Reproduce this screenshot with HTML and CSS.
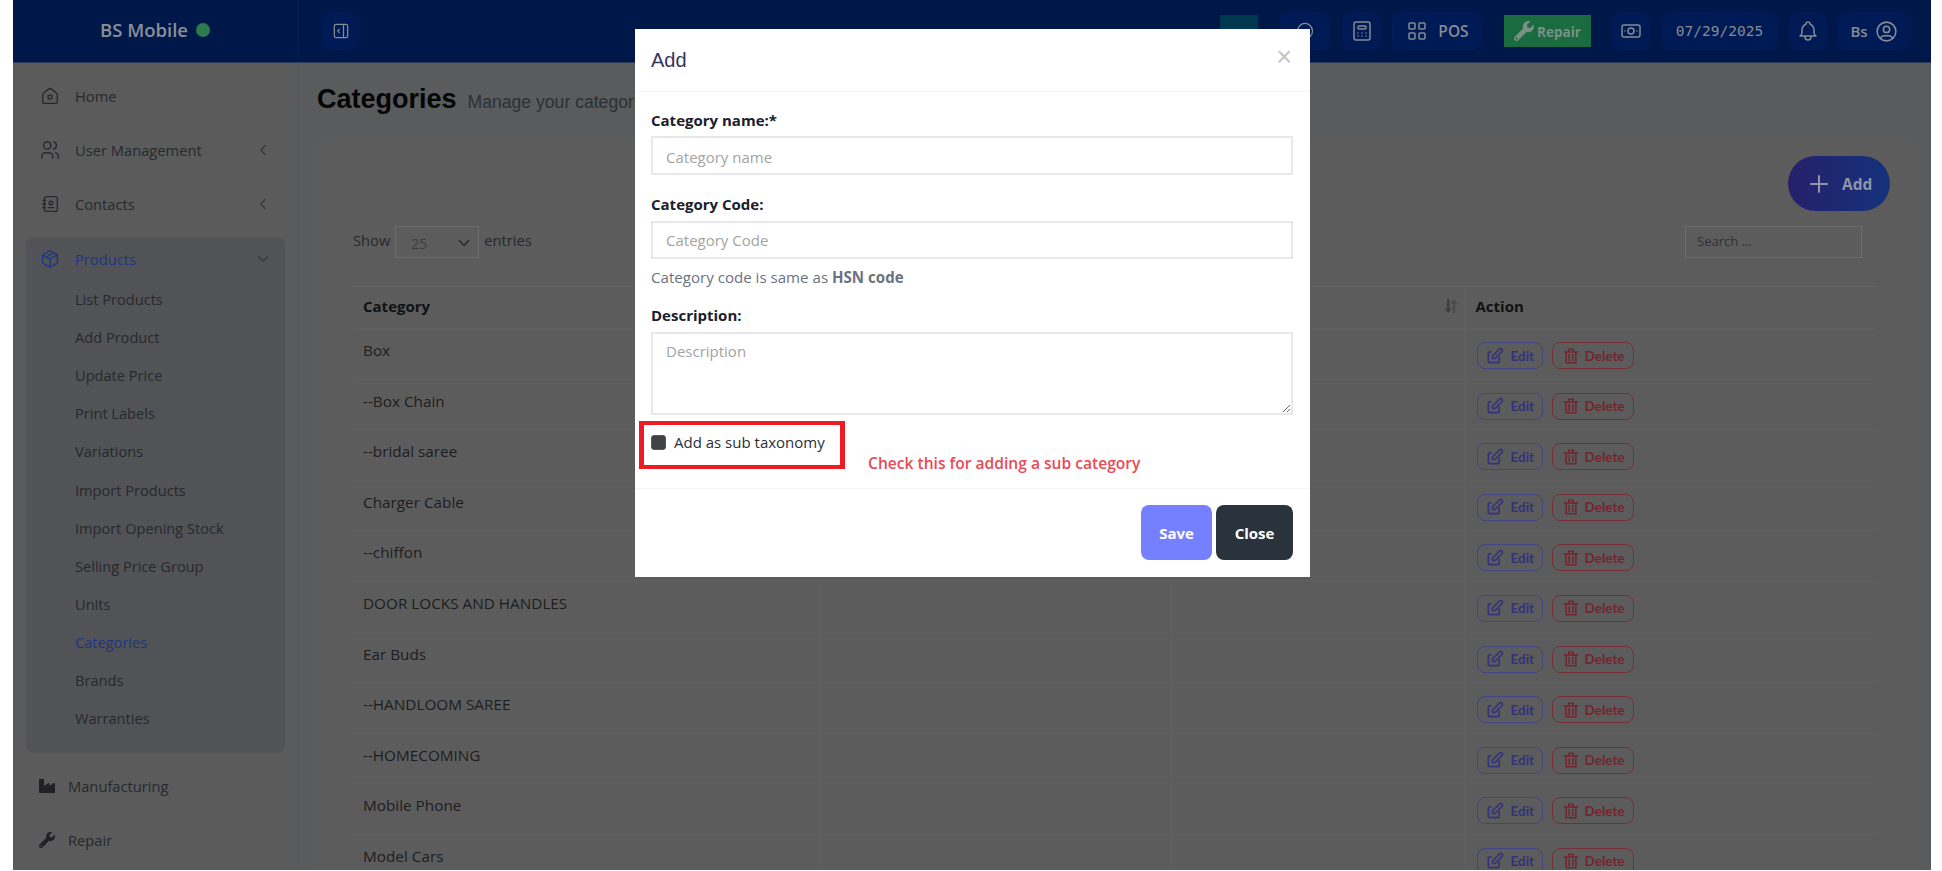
FILE: index.html
```html
<!DOCTYPE html>
<html lang="en">
<head>
  <meta charset="UTF-8" />
  <title>Categories</title>
  <link rel="stylesheet" href="styles.css">
</head>
<body>

  <svg class="sprite" xmlns="http://www.w3.org/2000/svg">
    <symbol id="i-home" viewBox="0 0 24 24"><path d="M19 8.7l-5.3-4.2a2.8 2.8 0 0 0 -3.4 0l-5.3 4.2a2.8 2.8 0 0 0 -1 2.2v7.1a2 2 0 0 0 2 2h12a2 2 0 0 0 2 -2v-7.1a2.8 2.8 0 0 0 -1 -2.2 M10 11h4v4h-4z"/></symbol>
    <symbol id="i-users" viewBox="0 0 24 24"><path d="M9 7m-4 0a4 4 0 1 0 8 0a4 4 0 1 0 -8 0 M3 21v-2a4 4 0 0 1 4 -4h4a4 4 0 0 1 4 4v2 M16 3.13a4 4 0 0 1 0 7.75 M21 21v-2a4 4 0 0 0 -3 -3.85"/></symbol>
    <symbol id="i-book" viewBox="0 0 24 24"><path d="M20 6v12a2 2 0 0 1 -2 2h-10a2 2 0 0 1 -2 -2v-12a2 2 0 0 1 2 -2h10a2 2 0 0 1 2 2z M10 16h6 M13 11m-2 0a2 2 0 1 0 4 0a2 2 0 1 0 -4 0 M4 8h3 M4 12h3 M4 16h3"/></symbol>
    <symbol id="i-box" viewBox="0 0 24 24"><path d="M12 3l8 4.5l0 9l-8 4.5l-8 -4.5l0 -9l8 -4.5 M12 12l8 -4.5 M12 12l0 9 M12 12l-8 -4.5 M16 5.25l-8 4.5"/></symbol>
    <symbol id="i-left" viewBox="0 0 24 24"><path d="M15 6l-6 6l6 6"/></symbol>
    <symbol id="i-down" viewBox="0 0 24 24"><path d="M6 9l6 6l6 -6"/></symbol>
    <symbol id="i-panel" viewBox="0 0 24 24"><path d="M4 4m0 2a2 2 0 0 1 2 -2h12a2 2 0 0 1 2 2v12a2 2 0 0 1 -2 2h-12a2 2 0 0 1 -2 -2z M15 4v16 M10 10l-2 2l2 2"/></symbol>
    <symbol id="i-calc" viewBox="0 0 24 24"><path d="M4 3m0 2a2 2 0 0 1 2 -2h12a2 2 0 0 1 2 2v14a2 2 0 0 1 -2 2h-12a2 2 0 0 1 -2 -2z M8 7m0 1a1 1 0 0 1 1 -1h6a1 1 0 0 1 1 1v1a1 1 0 0 1 -1 1h-6a1 1 0 0 1 -1 -1z M8 14v.01 M12 14v.01 M16 14v.01 M8 17v.01 M12 17v.01 M16 17v.01"/></symbol>
    <symbol id="i-grid" viewBox="0 0 24 24"><path d="M4 4m0 1a1 1 0 0 1 1 -1h4a1 1 0 0 1 1 1v4a1 1 0 0 1 -1 1h-4a1 1 0 0 1 -1 -1z M14 4m0 1a1 1 0 0 1 1 -1h4a1 1 0 0 1 1 1v4a1 1 0 0 1 -1 1h-4a1 1 0 0 1 -1 -1z M4 14m0 1a1 1 0 0 1 1 -1h4a1 1 0 0 1 1 1v4a1 1 0 0 1 -1 1h-4a1 1 0 0 1 -1 -1z M14 14m0 1a1 1 0 0 1 1 -1h4a1 1 0 0 1 1 1v4a1 1 0 0 1 -1 1h-4a1 1 0 0 1 -1 -1z"/></symbol>
    <symbol id="i-cash" viewBox="0 0 24 24"><path d="M12 12m-3 0a3 3 0 1 0 6 0a3 3 0 1 0 -6 0 M3 6m0 2a2 2 0 0 1 2 -2h14a2 2 0 0 1 2 2v8a2 2 0 0 1 -2 2h-14a2 2 0 0 1 -2 -2z M18 12l.01 0 M6 12l.01 0"/></symbol>
    <symbol id="i-bell" viewBox="0 0 24 24"><path d="M10 5a2 2 0 1 1 4 0a7 7 0 0 1 4 6v3a4 4 0 0 0 2 3h-16a4 4 0 0 0 2 -3v-3a7 7 0 0 1 4 -6 M9 17v1a3 3 0 0 0 6 0v-1"/></symbol>
    <symbol id="i-user" viewBox="0 0 24 24"><path d="M12 12m-9 0a9 9 0 1 0 18 0a9 9 0 1 0 -18 0 M12 10m-3 0a3 3 0 1 0 6 0a3 3 0 1 0 -6 0 M6.168 18.849a4 4 0 0 1 3.832 -2.849h4a4 4 0 0 1 3.834 2.855"/></symbol>
    <symbol id="i-clock" viewBox="0 0 24 24"><path d="M12 12m-9 0a9 9 0 1 0 18 0a9 9 0 1 0 -18 0"/></symbol>
    <symbol id="i-edit" viewBox="0 0 24 24"><path d="M7 7h-1a2 2 0 0 0 -2 2v9a2 2 0 0 0 2 2h9a2 2 0 0 0 2 -2v-5 M20.400 6.600a2.100 2.100 0 0 0 -3 -3l-8.400 8.400v3h3l8.400 -8.400z"/></symbol>
    <symbol id="i-trash" viewBox="0 0 24 24"><path d="M3 6.500h18 M9 6V3h6v3 M5.500 7v14h13V7 M9.500 10v8 M14.500 10v8"/></symbol>
    <symbol id="i-plus" viewBox="0 0 24 24"><path d="M12 4v16 M4 12h16"/></symbol>
    <symbol id="i-wrench" viewBox="0 0 512 512"><path d="M507.73 109.1c-2.24-9.03-13.54-12.09-20.12-5.51l-74.36 74.36-67.88-11.31-11.31-67.88 74.36-74.36c6.62-6.62 3.43-17.9-5.66-20.16-47.38-11.74-99.55.91-136.58 37.93-39.64 39.64-50.55 97.1-34.05 147.2L18.74 402.76c-24.99 24.99-24.99 65.51 0 90.5 24.99 24.99 65.51 24.99 90.5 0l213.21-213.21c50.12 16.71 107.47 5.68 147.37-34.22 37.07-37.07 49.7-89.32 37.91-136.73zM64 472c-13.25 0-24-10.75-24-24 0-13.26 10.75-24 24-24s24 10.74 24 24c0 13.25-10.75 24-24 24z"/></symbol>
    <symbol id="i-industry" viewBox="0 0 512 512"><path d="M475.115 163.781L336 252.309v-68.28c0-18.916-20.931-30.399-36.885-20.248L160 252.309V56c0-13.255-10.745-24-24-24H24C10.745 32 0 42.745 0 56v400c0 13.255 10.745 24 24 24h464c13.255 0 24-10.745 24-24V184.029c0-18.917-20.931-30.399-36.885-20.248z"/></symbol>
  </svg>

  <div class="page">

    <header class="topbar">
      <div class="brand">
        <span class="brand-name">BS Mobile</span>
        <span class="brand-dot"></span>
      </div>
      <div class="topbar-main">
        <button class="top-btn toggle-btn"><svg class="icon icon-20"><use href="#i-panel"/></svg></button>
        <div class="topbar-right">
          <span class="teal-btn"></span>
          <button class="top-btn clock-btn"><svg class="icon icon-20"><use href="#i-clock"/></svg></button>
          <button class="top-btn square-btn"><svg class="icon icon-24"><use href="#i-calc"/></svg></button>
          <button class="top-btn pos-btn"><svg class="icon icon-24"><use href="#i-grid"/></svg><span>POS</span></button>
          <button class="repair-btn"><svg class="fill-icon repair-icon"><use href="#i-wrench"/></svg><span>Repair</span></button>
          <button class="top-btn square-btn"><svg class="icon icon-24"><use href="#i-cash"/></svg></button>
          <button class="top-btn date-btn">07/29/2025</button>
          <button class="top-btn square-btn"><svg class="icon icon-24"><use href="#i-bell"/></svg></button>
          <button class="top-btn user-btn"><span>Bs</span><svg class="icon icon-25"><use href="#i-user"/></svg></button>
        </div>
      </div>
    </header>

    <div class="layout">
      <aside class="sidebar">
        <a class="nav-item"><svg class="icon nav-icon"><use href="#i-home"/></svg><span>Home</span></a>
        <a class="nav-item"><svg class="icon nav-icon"><use href="#i-users"/></svg><span>User Management</span><svg class="icon nav-arrow"><use href="#i-left"/></svg></a>
        <a class="nav-item"><svg class="icon nav-icon"><use href="#i-book"/></svg><span>Contacts</span><svg class="icon nav-arrow"><use href="#i-left"/></svg></a>

        <div class="nav-group">
          <a class="nav-head"><svg class="icon nav-icon"><use href="#i-box"/></svg><span>Products</span><svg class="icon nav-arrow"><use href="#i-down"/></svg></a>
          <a class="sub-item">List Products</a>
          <a class="sub-item">Add Product</a>
          <a class="sub-item">Update Price</a>
          <a class="sub-item">Print Labels</a>
          <a class="sub-item">Variations</a>
          <a class="sub-item">Import Products</a>
          <a class="sub-item">Import Opening Stock</a>
          <a class="sub-item">Selling Price Group</a>
          <a class="sub-item">Units</a>
          <a class="sub-item active">Categories</a>
          <a class="sub-item">Brands</a>
          <a class="sub-item">Warranties</a>
        </div>

        <a class="nav-item solid first-solid"><svg class="fill-icon"><use href="#i-industry"/></svg><span>Manufacturing</span></a>
        <a class="nav-item solid"><svg class="fill-icon"><use href="#i-wrench"/></svg><span>Repair</span></a>
      </aside>

      <main class="content">
        <div class="page-title">
          <h1>Categories</h1>
          <small>Manage your categories</small>
        </div>

        <section class="card">
          <div class="add-row">
            <button class="add-btn"><svg class="icon"><use href="#i-plus"/></svg><span>Add</span></button>
          </div>

          <div class="table-tools">
            <div class="show-entries">
              <span>Show</span>
              <div class="len-select"><span>25</span><svg class="icon"><use href="#i-down"/></svg></div>
              <span>entries</span>
            </div>
            <input class="search" type="text" placeholder="Search ...">
          </div>

          <table class="data-table">
            <thead>
              <tr>
                <th class="col-name">Category</th>
                <th class="col-code"></th>
                <th class="col-desc">
                  <svg class="sort-icon" viewBox="0 0 16 16"><path class="sort-down" d="M4 1h2.400v9.500H9L5.200 15 1.400 10.500H4z"/><path class="sort-up" d="M11 1l3.800 4.500H12.200V15H9.800V5.500H7.200z"/></svg>
                </th>
                <th>Action</th>
              </tr>
            </thead>
            <tbody>
              <tr><td>Box</td><td></td><td></td><td><button class="act edit"><svg class="icon"><use href="#i-edit"/></svg>Edit</button><button class="act del"><svg class="icon"><use href="#i-trash"/></svg>Delete</button></td></tr>
              <tr><td>--Box Chain</td><td></td><td></td><td><button class="act edit"><svg class="icon"><use href="#i-edit"/></svg>Edit</button><button class="act del"><svg class="icon"><use href="#i-trash"/></svg>Delete</button></td></tr>
              <tr><td>--bridal saree</td><td></td><td></td><td><button class="act edit"><svg class="icon"><use href="#i-edit"/></svg>Edit</button><button class="act del"><svg class="icon"><use href="#i-trash"/></svg>Delete</button></td></tr>
              <tr><td>Charger Cable</td><td></td><td></td><td><button class="act edit"><svg class="icon"><use href="#i-edit"/></svg>Edit</button><button class="act del"><svg class="icon"><use href="#i-trash"/></svg>Delete</button></td></tr>
              <tr><td>--chiffon</td><td></td><td></td><td><button class="act edit"><svg class="icon"><use href="#i-edit"/></svg>Edit</button><button class="act del"><svg class="icon"><use href="#i-trash"/></svg>Delete</button></td></tr>
              <tr><td>DOOR LOCKS AND HANDLES</td><td></td><td></td><td><button class="act edit"><svg class="icon"><use href="#i-edit"/></svg>Edit</button><button class="act del"><svg class="icon"><use href="#i-trash"/></svg>Delete</button></td></tr>
              <tr><td>Ear Buds</td><td></td><td></td><td><button class="act edit"><svg class="icon"><use href="#i-edit"/></svg>Edit</button><button class="act del"><svg class="icon"><use href="#i-trash"/></svg>Delete</button></td></tr>
              <tr><td>--HANDLOOM SAREE</td><td></td><td></td><td><button class="act edit"><svg class="icon"><use href="#i-edit"/></svg>Edit</button><button class="act del"><svg class="icon"><use href="#i-trash"/></svg>Delete</button></td></tr>
              <tr><td>--HOMECOMING</td><td></td><td></td><td><button class="act edit"><svg class="icon"><use href="#i-edit"/></svg>Edit</button><button class="act del"><svg class="icon"><use href="#i-trash"/></svg>Delete</button></td></tr>
              <tr><td>Mobile Phone</td><td></td><td></td><td><button class="act edit"><svg class="icon"><use href="#i-edit"/></svg>Edit</button><button class="act del"><svg class="icon"><use href="#i-trash"/></svg>Delete</button></td></tr>
              <tr><td>Model Cars</td><td></td><td></td><td><button class="act edit"><svg class="icon"><use href="#i-edit"/></svg>Edit</button><button class="act del"><svg class="icon"><use href="#i-trash"/></svg>Delete</button></td></tr>
            </tbody>
          </table>
        </section>
      </main>
    </div>

    <div class="modal">
      <div class="modal-header">
        <h4>Add</h4>
        <span class="modal-close">×</span>
      </div>
      <div class="modal-body">
        <label class="field-label">Category name:*</label>
        <input class="field name-field" type="text" placeholder="Category name">

        <label class="field-label code-label">Category Code:</label>
        <input class="field code-field" type="text" placeholder="Category Code">
        <p class="help">Category code is same as <strong>HSN code</strong></p>

        <label class="field-label desc-label">Description:</label>
        <textarea class="field desc-field" placeholder="Description"></textarea>

        <label class="check-row"><input type="checkbox"><span>Add as sub taxonomy</span></label>
      </div>
      <div class="modal-footer">
        <button class="btn-save">Save</button>
        <button class="btn-close">Close</button>
      </div>

      <!-- annotation drawn on top of the form -->
      <div class="mark-box"></div>
      <div class="mark-note">Check this for adding a sub category</div>
    </div>

  </div>

</body>
</html>
```

FILE: styles.css
```css
* {
  box-sizing: border-box;
}

body {
  margin: 0;
  background-color: #ffffff;
  font-family: "Open Sans", sans-serif;
  color: #27292d;
}

.sprite {
  display: none;
}

button {
  font-family: inherit;
  border: none;
  padding: 0;
}

.icon {
  fill: none;
  stroke: currentColor;
  stroke-width: 1.5;
  stroke-linecap: round;
  stroke-linejoin: round;
}

.fill-icon {
  fill: currentColor;
}

.icon-20 { width: 20px; height: 20px; }
.icon-24 { width: 24px; height: 24px; }
.icon-25 { width: 25px; height: 25px; }

.page {
  position: relative;
  width: 1918px;
  height: 870px;
  margin-left: 13px;
  overflow: hidden;
  background-color: #595b5d;
}

/* top bar */
.topbar {
  display: flex;
  height: 63px;
  background-color: #00174a;
  border-bottom: 1px solid #2c3a5c;
}

.brand {
  display: flex;
  align-items: center;
  gap: 8px;
  width: 286px;
  height: 62px;
  padding: 0 0 3px 87px;
  border-right: 1px solid #05214f;
}

.brand-name {
  font-size: 18.5px;
  font-weight: 600;
  color: #8b8f98;
}

.brand-dot {
  width: 14px;
  height: 14px;
  border-radius: 50%;
  background-color: #2d7a4f;
}

.topbar-main {
  flex: 1;
  display: flex;
  align-items: center;
  justify-content: space-between;
  padding: 0 20px 0 23px;
}

.top-btn {
  display: flex;
  align-items: center;
  justify-content: center;
  height: 38px;
  color: #878b93;
  background-color: #001a55;
  border: 1px solid #001d5a;
  border-radius: 10px;
}

.toggle-btn {
  width: 37px;
}

.topbar-right {
  display: flex;
  align-items: center;
}

.teal-btn {
  width: 38px;
  height: 32px;
  margin-right: 22px;
  background-color: #00394f;
}

.clock-btn {
  width: 50px;
  margin-right: 13px;
}

.square-btn {
  width: 38px;
}

.pos-btn {
  width: 90px;
  gap: 9px;
  margin: 0 22px 0 11px;
  font-size: 15.5px;
  font-weight: 600;
}

.repair-btn {
  display: flex;
  align-items: center;
  justify-content: center;
  gap: 3px;
  width: 87px;
  height: 32px;
  margin-right: 21px;
  background-color: #1a6b3f;
  color: #7b8f84;
  font-size: 13.5px;
  font-weight: 700;
}

.repair-btn span {
  margin-top: 2px;
}

.repair-icon {
  width: 20px;
  height: 20px;
}

.date-btn {
  width: 115px;
  margin: 0 12px;
  font-family: "DejaVu Sans Mono", monospace;
  font-size: 14.5px;
}

.user-btn {
  width: 73px;
  gap: 6px;
  margin-left: 11px;
  font-size: 15px;
  font-weight: 600;
}

/* sidebar */
.layout {
  display: flex;
}

.sidebar {
  width: 286px;
  flex-shrink: 0;
  height: 807px;
  padding-top: 6px;
  background-color: #5b5b5b;
  border-right: 1px solid #565759;
  font-size: 14.7px;
}

.nav-item {
  display: flex;
  align-items: center;
  height: 54px;
  padding: 0 27px;
}

.nav-icon {
  width: 22px;
  height: 22px;
  margin-right: 14px;
  flex-shrink: 0;
  margin-left: -1px;
}

.nav-arrow {
  width: 18px;
  height: 18px;
  margin-left: auto;
  margin-right: -1px;
  color: #35373b;
}

.nav-group {
  margin: 6px 13px 0;
  padding-bottom: 16px;
  background-color: #525356;
  border-radius: 8px;
}

.nav-head {
  display: flex;
  align-items: center;
  height: 43px;
  padding: 0 14px;
  color: #1b3684;
  font-weight: 500;
}

.sub-item {
  display: flex;
  align-items: center;
  height: 38.1px;
  padding-left: 49px;
  font-size: 14.6px;
}

.sub-item.active {
  color: #1b3684;
}

.nav-item.solid {
  height: 54px;
  padding-left: 26px;
  color: #1f2126;
}

.nav-item.solid span {
  margin-left: 13px;
  color: #27292d;
}

.nav-item.solid .fill-icon {
  width: 16px;
  height: 16px;
}

.first-solid {
  margin-top: 6px;
}

/* main area */
.content {
  flex: 1;
  min-width: 0;
  padding: 0 16px 0 18px;
}

.page-title {
  display: flex;
  align-items: baseline;
  gap: 11px;
  height: 74px;
  padding-top: 21px;
  font-family: "Liberation Sans", sans-serif;
}

.page-title h1 {
  margin: 0;
  font-size: 27px;
  font-weight: 700;
  color: #050505;
}

.page-title small {
  font-size: 17.6px;
  color: #2e3033;
}

.card {
  height: 800px;
  padding: 19px 38px 0 36px;
  background-color: #5c5c5c;
  border-radius: 14px;
}

.add-row {
  display: flex;
  justify-content: flex-end;
  margin-right: -13px;
}

.add-btn {
  display: flex;
  align-items: center;
  gap: 11px;
  width: 102px;
  height: 55px;
  padding-left: 19px;
  border-radius: 28px;
  background: linear-gradient(90deg, #26206b, #14327a);
  color: #8f94a8;
  font-size: 15.5px;
  font-weight: 700;
}

.add-btn .icon {
  width: 24px;
  height: 24px;
  stroke-width: 2;
}

.table-tools {
  display: flex;
  align-items: center;
  justify-content: space-between;
  margin: 15px 15px 28px 0;
}

.show-entries {
  display: flex;
  align-items: center;
  gap: 5px;
  font-size: 14.7px;
}

.show-entries > span {
  margin-top: -4px;
}

.len-select {
  display: flex;
  align-items: center;
  justify-content: space-between;
  width: 84px;
  height: 32px;
  padding: 2px 5px 0 15px;
  border: 1px solid #6c6c6c;
  font-size: 14px;
  color: #3a3c40;
}

.len-select .icon {
  width: 18px;
  height: 18px;
  stroke-width: 2;
  color: #27292d;
}

.search {
  width: 177px;
  height: 32px;
  padding: 0 11px 2px;
  background: transparent;
  border: 1px solid #6c6c6c;
  font-family: inherit;
  font-size: 13px;
}

.search::placeholder {
  color: #303236;
  opacity: 1;
}

.data-table {
  width: 1524px;
  table-layout: fixed;
  border-collapse: collapse;
  font-size: 15.3px;
}

.data-table th {
  height: 42px;
  padding: 0 10px 3px;
  text-align: left;
  font-weight: 700;
  color: #101114;
  border: 1px solid #626262;
  border-width: 1px 0;
  font-size: 15px;
}

.col-name { width: 465px; }
.col-code { width: 353px; }
.col-desc { width: 294px; position: relative; }

.sort-icon {
  position: absolute;
  right: 6px;
  top: 11px;
  width: 16px;
  height: 16px;
}

.sort-down { fill: #3c3d40; }
.sort-up { fill: #4a4b4e; }

.data-table td {
  height: 50.6px;
  padding: 13px 10px 0;
  vertical-align: top;
  line-height: 17px;
  color: #1c1d20;
  border-bottom: 1px solid #606060;
}

.data-table th + th,
.data-table td + td {
  border-left: 1px solid #606060;
}

.act {
  display: inline-flex;
  align-items: center;
  height: 27px;
  padding: 0 7px;
  background: transparent;
  border: 1px solid;
  border-radius: 8px;
  font-family: "Lato", sans-serif;
  font-size: 13.5px;
  font-weight: 700;
  vertical-align: top;
  margin-left: 1px;
}

.act .icon {
  width: 20px;
  height: 20px;
  stroke-width: 2;
  margin-right: 6px;
}

.act.edit {
  width: 66px;
  color: #33327a;
  border-color: #414485;
}

.act.del {
  width: 82px;
  margin-left: 9px;
  padding-left: 9px;
  color: #722530;
  border-color: #762e38;
}

.act.del .icon {
  width: 18px;
  height: 18px;
  margin-right: 5px;
}

/* modal */
.modal {
  position: absolute;
  left: 622px;
  top: 29px;
  width: 675px;
  height: 548px;
  background-color: #ffffff;
  color: #1f2530;
}

.modal-header {
  display: flex;
  align-items: center;
  justify-content: space-between;
  height: 63px;
  padding: 0 17px 0 16px;
  border-bottom: 1px solid #f4f4f4;
}

.modal-header h4 {
  margin: 0;
  font-family: "Liberation Sans", sans-serif;
  font-size: 20px;
  font-weight: 400;
  color: #3a3560;
}

.modal-close {
  margin: -6px 1px 0 0;
  font-family: "Liberation Sans", sans-serif;
  font-size: 27px;
  color: #c4c4c4;
}

.modal-body {
  height: 396px;
  padding: 18px 17px 0 16px;
}

.field-label {
  display: block;
  height: 20px;
  margin-bottom: 6px;
  line-height: 20px;
  font-size: 15px;
  font-weight: 700;
  color: #1a202c;
}

.code-label {
  margin: -1px 0 7px;
}

.desc-label {
  margin: -2px 0 7px;
}

.field {
  display: block;
  width: 100%;
  padding: 0 13px;
  border: 2px solid #e7e8ec;
  font-family: inherit;
  font-size: 15px;
  color: #333;
}

.field::placeholder {
  color: #a3a3a3;
  opacity: 1;
}

.name-field {
  height: 39px;
  padding-top: 2px;
  margin-bottom: 20px;
}

.code-field {
  height: 38px;
}

.desc-field {
  height: 83px;
  padding-top: 7px;
}

.help {
  height: 20px;
  margin: 8px 0 20px;
  line-height: 20px;
  font-size: 15.1px;
  color: #6b7280;
}

.check-row {
  display: flex;
  align-items: center;
  height: 20px;
  margin-top: 17px;
  font-size: 15px;
  color: #2a2f38;
}

.check-row input {
  appearance: none;
  width: 15px;
  height: 15px;
  margin: 0 8px 0 0;
  background-color: #404245;
  border: 1px solid #55585c;
  border-radius: 3px;
}

.modal-footer {
  display: flex;
  justify-content: flex-end;
  gap: 4px;
  padding: 16px 17px 16px 16px;
  border-top: 1px solid #f4f4f4;
}

.modal-footer button {
  height: 55px;
  color: #ffffff;
  border-radius: 8px;
  font-size: 15px;
  font-weight: 700;
}

.btn-save {
  width: 71px;
  background-color: #7480ff;
}

.btn-close {
  width: 77px;
  background-color: #2a323c;
}

.mark-box {
  position: absolute;
  left: 4px;
  top: 392px;
  width: 206px;
  height: 48px;
  border: 4px solid #ed1c24;
  border-left-width: 5px;
  border-right-width: 5px;
}

.mark-note {
  position: absolute;
  left: 233px;
  top: 424px;
  line-height: 20px;
  font-size: 15.6px;
  font-weight: 600;
  color: #e94a55;
  white-space: nowrap;
}
```
